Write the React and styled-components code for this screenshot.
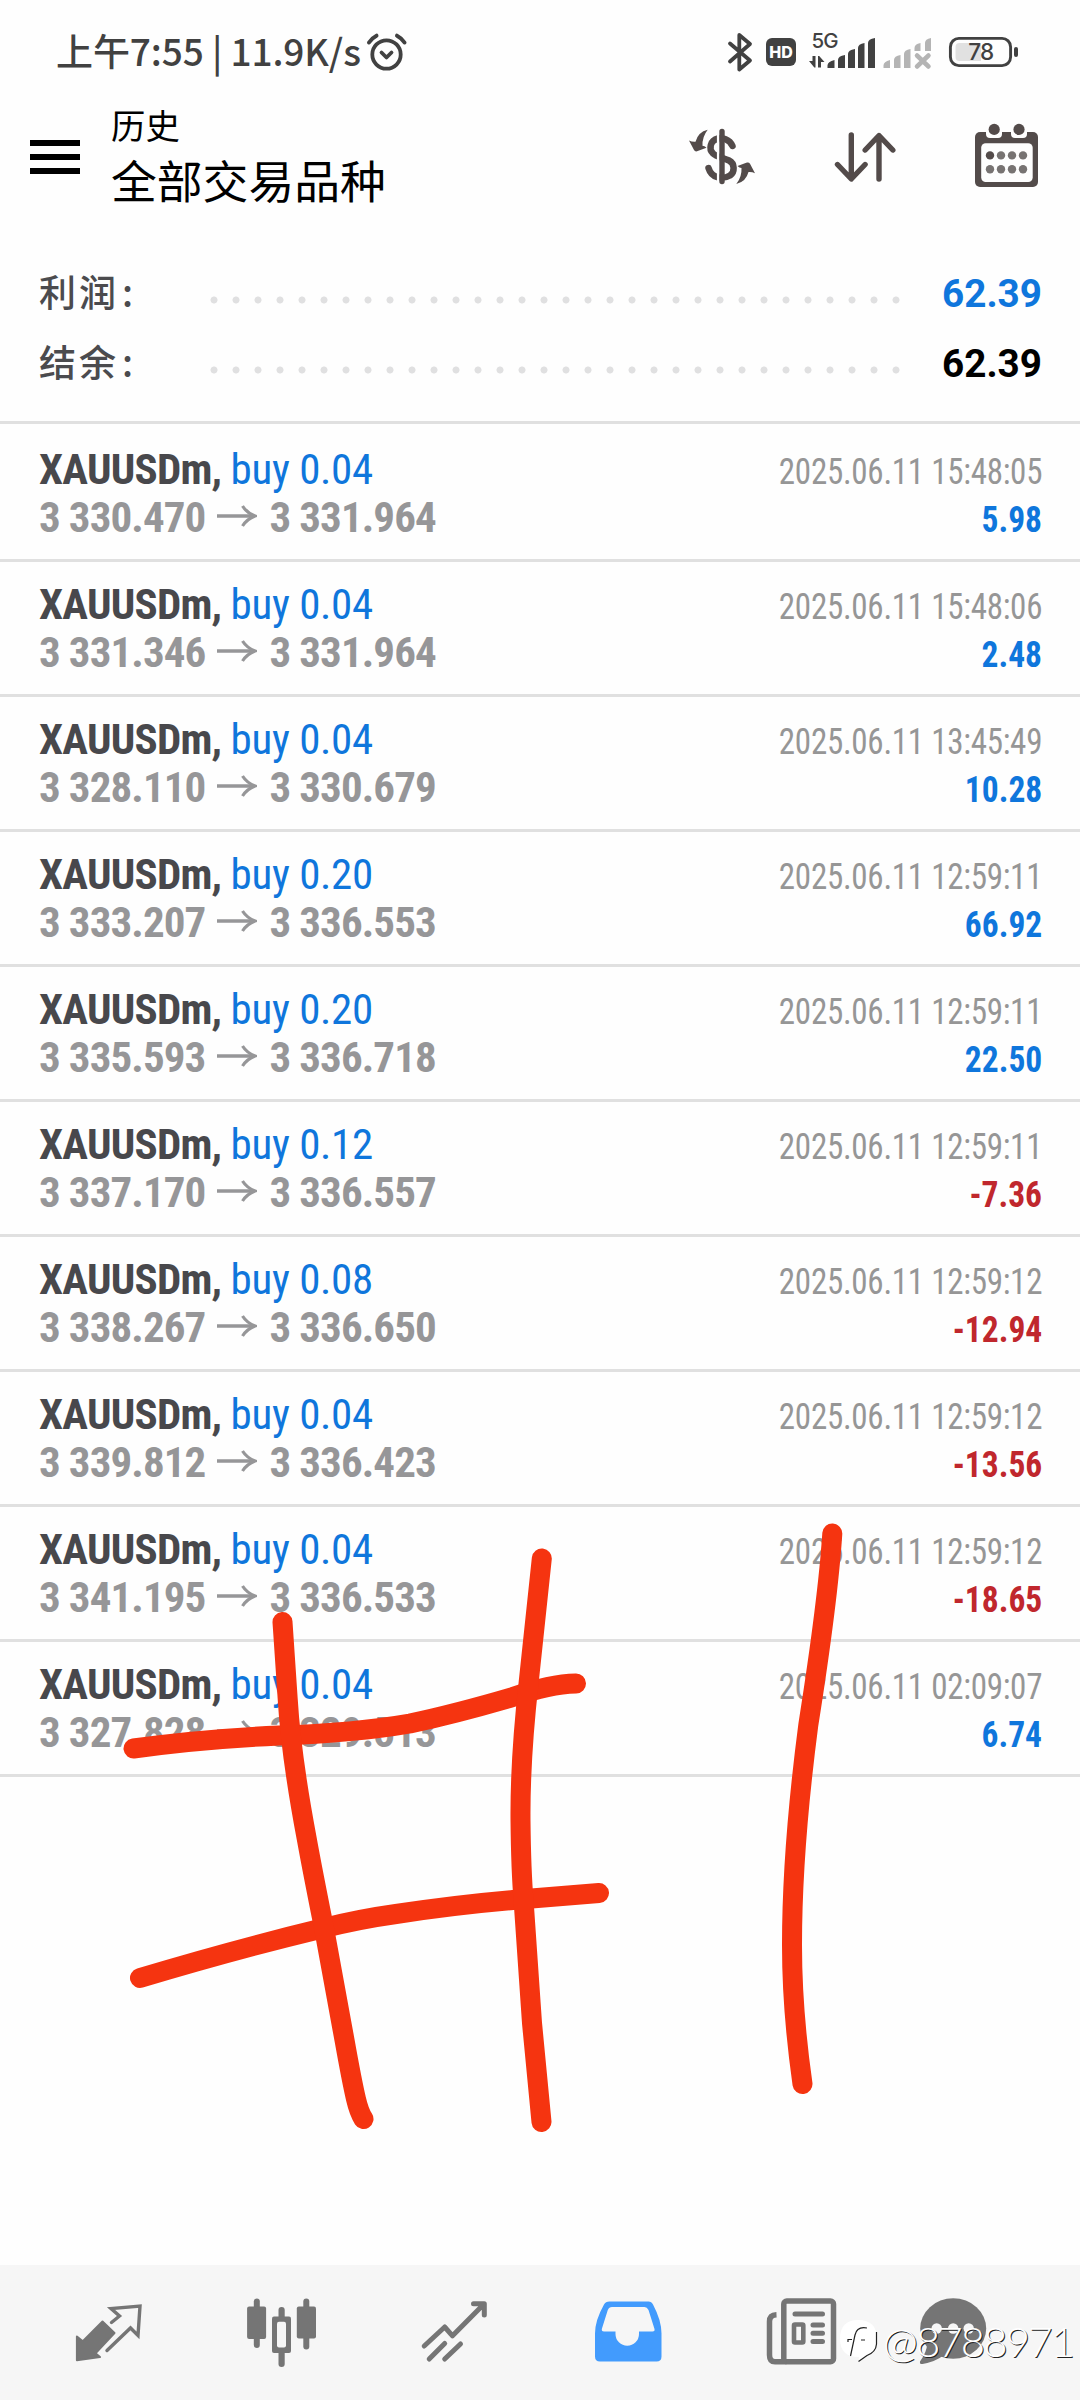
import React from 'react';
import styled, { createGlobalStyle, css } from 'styled-components';

const SANS = 'Roboto, "Noto Sans CJK SC", sans-serif';
const CJK = '"Noto Sans CJK SC", Roboto, sans-serif';
const BLUE = '#0f76dc';
const RED = '#c0272d';
const INK = '#414141';
const TOOL = '#534b4a';
const NAV = '#757575';
const MARKER = '#f53410';

const GlobalStyle = createGlobalStyle`
  * { box-sizing: border-box; }
  body { margin: 0; background: #fefefe; }
`;

const Screen = styled.div`
  position: relative;
  display: flex;
  flex-direction: column;
  width: 1080px;
  height: 2400px;
  overflow: hidden;
  background: #fefefe;
  font-family: ${SANS};
`;

const StatusBar = styled.header`
  display: flex;
  align-items: center;
  justify-content: space-between;
  height: 104px;
  padding: 0 62px 0 56px;
  color: ${INK};
`;

const Clock = styled.div`
  display: flex;
  align-items: center;
  gap: 6px;
  font: 500 37px/50px ${CJK};
  letter-spacing: -0.1px;
  white-space: nowrap;
`;

const ClockText = styled.span`
  padding-bottom: 4px;
`;

const StatusIcons = styled.div`
  display: flex;
  align-items: center;
`;

const Glyph = styled.svg`
  display: block;
  flex: none;
  width: ${(p) => p.$w}px;
  height: ${(p) => p.$h}px;
  margin-left: ${(p) => p.$gap || 0}px;
  overflow: visible;
`;

const Header = styled.div`
  display: flex;
  align-items: center;
  height: 108px;
  padding: 0 38px 0 30px;
`;

const MenuButton = styled.div`
  display: flex;
  flex-direction: column;
  gap: 8px;
  width: 50px;
  padding-bottom: 2px;
`;

const MenuBar = styled.span`
  height: 6px;
  background: #000;
`;

const Titles = styled.div`
  flex: 1;
  margin-left: 31px;
  padding-bottom: 5px;
  color: #000;
  font-family: ${CJK};
`;

const Title = styled.div`
  font-size: 34.4px;
  line-height: 46px;
`;

const Subtitle = styled.div`
  font-size: 45.8px;
  line-height: 64px;
`;

const Tools = styled.div`
  display: flex;
  gap: 72px;
`;

const Summary = styled.section`
  height: 212px;
  padding: 45px 38px 0 39px;
  border-bottom: 3px solid #e0e0e0;
`;

const SummaryRow = styled.div`
  display: flex;
  align-items: center;
  height: 70px;
`;

const SummaryLabel = styled.div`
  width: 163.5px;
  padding-bottom: 3px;
  font: 500 37px/50px ${CJK};
  letter-spacing: 3px;
  color: #4b4b4e;
`;

const Colon = styled.span`
  margin-left: 3px;
`;

const Leader = styled.div`
  width: 704px;
  height: 8px;
  margin-top: 16px;
  background: radial-gradient(circle at center, #e0e0e1 3.1px, transparent 3.9px) 0 0 / 22px 8px;
`;

const SummaryValue = styled.div`
  flex: 1;
  padding-top: 3px;
  text-align: right;
  font: 700 38.7px/50px ${SANS};
  color: ${(p) => (p.$accent ? BLUE : '#000')};
`;

const List = styled.main`
  flex: 1;
  padding-top: 3px;
`;

const Deal = styled.article`
  height: 135px;
  padding: 18px 38px 0 39px;
  border-bottom: 3px solid #e0e0e0;
`;

const Line = styled.div`
  display: flex;
  align-items: baseline;
  justify-content: space-between;
  height: 48px;
  line-height: 48px;
  white-space: pre;
`;

const condensed = css`
  font-family: ${SANS};
  font-stretch: 75%;
`;

const Symbol = styled.div`
  ${condensed}
  font-size: 43px;
  font-weight: 700;
  letter-spacing: -0.75px;
  color: #48484c;
`;

const Side = styled.span`
  font-weight: 400;
  letter-spacing: -0.3px;
  color: ${BLUE};
`;

const Time = styled.div`
  ${condensed}
  font-size: 36px;
  letter-spacing: -0.3px;
  color: #969696;
  transform: scaleX(0.917);
  transform-origin: right;
`;

const Prices = styled.div`
  ${condensed}
  display: flex;
  align-items: baseline;
  font-size: 43px;
  font-weight: 700;
  letter-spacing: -0.9px;
  color: #969698;
`;

const Arrow = styled.svg`
  width: 40px;
  height: 22px;
  margin: 0 12px 0 12px;
  transform: translateY(-5px);
`;

const Profit = styled.div`
  ${condensed}
  font-size: 36px;
  font-weight: 700;
  color: ${(p) => (p.$loss ? RED : BLUE)};
  transform: scaleX(0.93);
  transform-origin: right;
`;

const TabBar = styled.nav`
  display: grid;
  grid-template-columns: repeat(5, 173px) 132px;
  place-items: center;
  height: 135px;
  padding-left: 22px;
  background: #f6f6f6;
`;

const Scribble = styled.svg`
  position: absolute;
  left: 120px;
  top: 1510px;
  width: 740px;
  height: 640px;
`;

const Watermark = styled.div`
  position: absolute;
  left: 838px;
  top: 2315px;
  display: flex;
  align-items: center;
  gap: 5px;
  height: 52px;
  font: 300 42px/52px Lato, sans-serif;
  letter-spacing: -1.9px;
  color: #fff;
  text-shadow: 1px 1px 0 #222;
  white-space: nowrap;
`;

const deals = [
  ['0.04', '3 330.470', '3 331.964', '2025.06.11 15:48:05', '5.98'],
  ['0.04', '3 331.346', '3 331.964', '2025.06.11 15:48:06', '2.48'],
  ['0.04', '3 328.110', '3 330.679', '2025.06.11 13:45:49', '10.28'],
  ['0.20', '3 333.207', '3 336.553', '2025.06.11 12:59:11', '66.92'],
  ['0.20', '3 335.593', '3 336.718', '2025.06.11 12:59:11', '22.50'],
  ['0.12', '3 337.170', '3 336.557', '2025.06.11 12:59:11', '-7.36'],
  ['0.08', '3 338.267', '3 336.650', '2025.06.11 12:59:12', '-12.94'],
  ['0.04', '3 339.812', '3 336.423', '2025.06.11 12:59:12', '-13.56'],
  ['0.04', '3 341.195', '3 336.533', '2025.06.11 12:59:12', '-18.65'],
  ['0.04', '3 327.828', '3 329.513', '2025.06.11 02:09:07', '6.74'],
];

const AlarmIcon = () => (
  <Glyph $w={40} $h={40} viewBox="368 32 40 40" fill="none" stroke={INK} strokeLinecap="round">
    <circle cx="387.5" cy="54.5" r="14.2" strokeWidth="3.8" />
    <path d="M382.5 52.5l5 5 5-5" strokeWidth="3.8" strokeLinejoin="round" />
    <path d="M370 42.5q3-4.5 7.5-6.8M405.5 42.5q-3-4.5-7.5-6.8" strokeWidth="4" />
  </Glyph>
);

const BluetoothIcon = () => (
  <Glyph $w={26} $h={40} viewBox="727 32 26 40" fill="none" stroke={INK} strokeWidth="3.8" strokeLinecap="round" strokeLinejoin="round">
    <path d="M730 43.5L750 60.5L739.3 69.5V35L750 44L730 61.5" />
  </Glyph>
);

const HdIcon = () => (
  <Glyph $w={30} $h={40} $gap={13} viewBox="766 32 30 40">
    <rect x="766" y="38" width="30" height="28" rx="6" fill={INK} />
    <text x="781" y="58" textAnchor="middle" fontFamily="Inter, sans-serif" fontWeight="800" fontSize="16" fill="#fff">HD</text>
  </Glyph>
);

const SignalIcon = () => (
  <Glyph $w={66} $h={40} $gap={13} viewBox="809 32 66 40" fill={INK}>
    <text x="811.5" y="48" fontFamily="Inter, sans-serif" fontWeight="500" fontSize="20.5" letterSpacing="-1">5G</text>
    <path d="M812.5 56h3v11.5h-1.2l-5.3-6.5h3.5zM818 67.500h3V62h3.5l-5.3-6h-1.2z" />
    <path d="M827.5 68v-2.5q0-4 7-5.5v8zM838 68v-8q0-4 7-5v13zM848 68V54q0-4 7-5v19zM858 68V48q0-4 6.5-5v25zM868 68V43q0-4 7-5v30z" />
  </Glyph>
);

const NoSignalIcon = () => (
  <Glyph $w={48} $h={40} $gap={8} viewBox="883 32 48 40" fill="#b4b4b4">
    <path d="M883.5 68v-2.5q0-4 6.5-5.5v8zM894 68v-8q0-4 6.500-5v13zM904 68V54q0-4 6.5-5v19zM914.5 51v-3q0-4 6-5v8zM925 51v-8q0-4 6-5v13z" />
    <path d="M917 55.500l11.5 11M928.500 55.500l-11.500 11" stroke="#b4b4b4" strokeWidth="4.5" strokeLinecap="round" />
  </Glyph>
);

const BatteryIcon = () => (
  <Glyph $w={69} $h={40} $gap={18} viewBox="949 32 69 40">
    <rect x="950.4" y="38.4" width="60.2" height="27.2" rx="8.5" fill="none" stroke={INK} strokeWidth="2.9" />
    <path d="M959.5 43H981v18h-21.500q-4 0-4-4V47q0-4 4-4z" fill="#e1e1e1" />
    <rect x="1014" y="47" width="4" height="10" rx="2" fill={INK} />
    <text x="980.7" y="60.3" textAnchor="middle" fontFamily="Inter, sans-serif" fontWeight="500" fontSize="22.5" letterSpacing="-0.8" fill={INK}>78</text>
  </Glyph>
);

const TURN_ARROW =
  'M689 140.5L694 150Q695 151.8 697 151.3L706.5 147.8Q704.5 146 702.5 145.8Q702 137 707.7 129.7Q698 132 695.5 141.7Q692 142 689 140.5Z';

const CurrencyIcon = () => (
  <Glyph $w={70} $h={70} viewBox="688 123 70 70" fill={TOOL}>
    <path d="M732.5 146C729.5 139 722 137.5 718 138.5C710 140.5 708.5 149 713 153.5C716.5 157 724 158 729 160.5C735 163.5 735 172 730 175.5C722 180 711.5 178 708.5 168" fill="none" stroke={TOOL} strokeWidth="6.5" strokeLinecap="round" />
    <path d="M718.2 132v50" stroke="#fefefe" strokeWidth="2.6" />
    <path d="M722 131.5v50" stroke={TOOL} strokeWidth="5.4" strokeLinecap="round" />
    <path d={TURN_ARROW} />
    <path transform="rotate(180 722 156.9)" d={TURN_ARROW} />
  </Glyph>
);

const SortIcon = () => (
  <Glyph $w={70} $h={70} viewBox="830 123 70 70" fill="none" stroke={TOOL} strokeWidth="5.4" strokeLinecap="round" strokeLinejoin="round">
    <path d="M851.3 135v43.5M837.5 164.5l13.8 14.5 13.8-14.5" />
    <path d="M879 179V136M865.2 150l13.8-14.5 13.8 14.5" />
  </Glyph>
);

const CalendarIcon = () => (
  <Glyph $w={70} $h={70} viewBox="972 123 70 70">
    <rect x="975" y="132" width="63" height="55" rx="5" fill={TOOL} />
    <path d="M986 130h16v4q0 4-4 4h-8q-4 0-4-4zM1011 130h16v4q0 4-4 4h-8q-4 0-4-4z" fill="#fefefe" />
    <rect x="981.2" y="143.3" width="51.5" height="38.7" rx="4.5" fill="#fefefe" />
    <circle cx="994.2" cy="129.4" r="5.6" fill={TOOL} />
    <circle cx="1019" cy="129.4" r="5.6" fill={TOOL} />
    {[155.4, 169.3].map((y) =>
      [990, 1001, 1012, 1023].map((x) => (
        <circle key={`${x}-${y}`} cx={x} cy={y} r="4.2" fill={x === 990 && y < 160 ? TOOL : '#777372'} />
      ))
    )}
  </Glyph>
);

const QuotesIcon = () => (
  <Glyph $w={70} $h={70} viewBox="73.5 2297.5 70 70" strokeLinejoin="round" strokeLinecap="round">
    <path d="M76.4 2336L82.3 2340.8L102 2321L114 2332.5L95 2352.7L99.5 2356.5L76.4 2359.7Z" fill={NAV} stroke={NAV} strokeWidth="2" />
    <path d="M111 2322l8-6.5-8.5-7.5 29-2.5-2 29.5-7.5-7.5-23.5 22.5" fill="none" stroke={NAV} strokeWidth="3.4" strokeLinejoin="miter" />
  </Glyph>
);

const ChartIcon = () => (
  <Glyph $w={70} $h={70} viewBox="246.5 2297.5 70 70" fill={NAV}>
    <rect x="253.3" y="2298" width="6" height="49.5" rx="3" />
    <rect x="246.6" y="2306" width="19" height="32.5" rx="2" />
    <rect x="302.8" y="2298" width="6" height="51" rx="3" />
    <rect x="296.3" y="2306" width="19.2" height="32" rx="2" />
    <rect x="278" y="2306.5" width="6.2" height="60" rx="3" />
    <rect x="271.5" y="2316" width="19" height="36.5" rx="2" />
    <rect x="276.5" y="2321.3" width="9" height="25.7" rx="2" fill="#f6f6f6" />
  </Glyph>
);

const TradeIcon = () => (
  <Glyph $w={70} $h={70} viewBox="419.5 2297.5 70 70" fill="none" stroke={NAV} strokeWidth="5" strokeLinecap="round" strokeLinejoin="round">
    <path d="M423.7 2345.5L444.2 2326.5L452 2335.3L483.5 2303.5M473 2303.3H483.8V2314.5" />
    <path d="M428.7 2358.5L444.2 2343M444.2 2358.5L460 2343.5" />
  </Glyph>
);

const HistoryIcon = () => (
  <Glyph $w={70} $h={70} viewBox="592.5 2297.5 70 70">
    <path fillRule="evenodd" fill="#429bfd" d="M609 2301H648Q651 2301 652.5 2304Q661 2320 661 2333V2356Q661 2361 656 2361H599.5Q594.5 2361 594.5 2356V2333Q594.5 2320 603.5 2304Q605 2301 609 2301ZM611.5 2306.5Q608.5 2306.5 607.3 2309.5L601.3 2328.5Q601 2331 603.5 2331H615V2333.5A11.7 11.7 0 0 0 638.5 2333.5V2331H652Q654.5 2331 654 2328.5L648 2309.5Q646.5 2306.5 644 2306.5Z" />
  </Glyph>
);

const NewsIcon = () => (
  <Glyph $w={70} $h={70} viewBox="765.5 2297.5 70 70" fill="none" stroke={NAV}>
    <rect x="783.3" y="2300.5" width="49.7" height="60.8" rx="3" strokeWidth="5.5" />
    <path d="M776 2314.2Q769 2314.5 769 2321V2354.5Q769 2361.3 774.5 2361.3H786" strokeWidth="5.5" />
    <rect x="793.5" y="2324" width="9.3" height="18" rx="1" strokeWidth="4.6" />
    <path d="M794.5 2313.5h27.5M812.5 2324.5h9.5M812.5 2332.7h9.5M812.5 2341h9.5" strokeWidth="5" strokeLinecap="round" />
  </Glyph>
);

const ChatIcon = () => (
  <Glyph $w={70} $h={70} viewBox="918 2297.5 70 70" fill={NAV}>
    <ellipse cx="953.2" cy="2328" rx="33" ry="30.2" />
    <path d="M927 2344Q927 2351 920 2361Q919.5 2364 922.5 2363.5Q936 2361 944 2354.5Z" />
    <circle cx="936.7" cy="2328" r="5.2" fill="#f6f6f6" />
    <circle cx="953.2" cy="2328" r="5.2" fill="#f6f6f6" />
    <circle cx="968.7" cy="2328" r="5.2" fill="#f6f6f6" />
  </Glyph>
);

const WatermarkLogo = () => (
  <Glyph $w={40} $h={46} viewBox="838 2320 40 46">
    <path d="M858 2322Q877 2322 877 2341Q877 2354 867 2358L858.5 2363L859 2359Q840 2359 840 2341Q840 2322 858 2322Z" fill="#fff" />
    <path d="M876.5 2334V2346Q876 2354 867 2357.5L858.5 2363.5M867 2330Q857 2328 855 2337L850.5 2358M848 2344v-2.5h4M861 2342h4" fill="none" stroke="#222" strokeWidth="1.2" />
  </Glyph>
);

const DealRow = ({ deal: [volume, open, close, time, profit] }) => (
  <Deal>
    <Line>
      <Symbol>XAUUSDm, <Side>buy {volume}</Side></Symbol>
      <Time>{time}</Time>
    </Line>
    <Line>
      <Prices>
        <span>{open}</span>
        <Arrow viewBox="0 0 40 22" fill="none" stroke="#969698">
          <path d="M0 11H37" strokeWidth="3.6" />
          <path d="M25.5 1Q30 8 38 11Q30 14 25.5 21" strokeWidth="3.2" />
        </Arrow>
        <span>{close}</span>
      </Prices>
      <Profit $loss={profit.startsWith('-')}>{profit}</Profit>
    </Line>
  </Deal>
);

export default function App() {
  return (
    <Screen>
      <GlobalStyle />
      <StatusBar>
        <Clock>
          <ClockText>上午7:55 | 11.9K/s</ClockText>
          <AlarmIcon />
        </Clock>
        <StatusIcons>
          <BluetoothIcon />
          <HdIcon />
          <SignalIcon />
          <NoSignalIcon />
          <BatteryIcon />
        </StatusIcons>
      </StatusBar>
      <Header>
        <MenuButton>
          <MenuBar />
          <MenuBar />
          <MenuBar />
        </MenuButton>
        <Titles>
          <Title>历史</Title>
          <Subtitle>全部交易品种</Subtitle>
        </Titles>
        <Tools>
          <CurrencyIcon />
          <SortIcon />
          <CalendarIcon />
        </Tools>
      </Header>
      <Summary>
        <SummaryRow>
          <SummaryLabel>利润<Colon>:</Colon></SummaryLabel>
          <Leader />
          <SummaryValue $accent>62.39</SummaryValue>
        </SummaryRow>
        <SummaryRow>
          <SummaryLabel>结余<Colon>:</Colon></SummaryLabel>
          <Leader />
          <SummaryValue>62.39</SummaryValue>
        </SummaryRow>
      </Summary>
      <List>
        {deals.map((deal) => (
          <DealRow key={deal[1]} deal={deal} />
        ))}
      </List>
      <TabBar>
        <QuotesIcon />
        <ChartIcon />
        <TradeIcon />
        <HistoryIcon />
        <NewsIcon />
        <ChatIcon />
      </TabBar>
      <Scribble viewBox="120 1510 740 640" fill="none" stroke={MARKER} strokeWidth="20" strokeLinecap="round" strokeLinejoin="round">
        <path d="M133.5 1748.5Q203 1739 279 1735.5Q355 1733 410 1723.5Q455 1714 513 1697Q550 1684 576 1683.5" />
        <path d="M140 1978Q237 1949 324 1928Q360 1919 396 1914Q455 1905 513 1900L599 1893" />
        <path d="M282.5 1622L287.7 1699Q291 1755 306.6 1838Q312 1868 324 1928L344.5 2040Q352 2082 356 2099Q359 2112 363.5 2119" />
        <path d="M541.8 1558.5L528.7 1682Q520 1760 520.5 1820Q521 1870 523.6 1901L532 2023L541.5 2122" />
        <path d="M832.3 1533.5Q828 1600 808.3 1725Q792 1850 792 1945Q792 2010 802.5 2084" />
      </Scribble>
      <Watermark>
        <WatermarkLogo />
        <span>@8788971</span>
      </Watermark>
    </Screen>
  );
}
